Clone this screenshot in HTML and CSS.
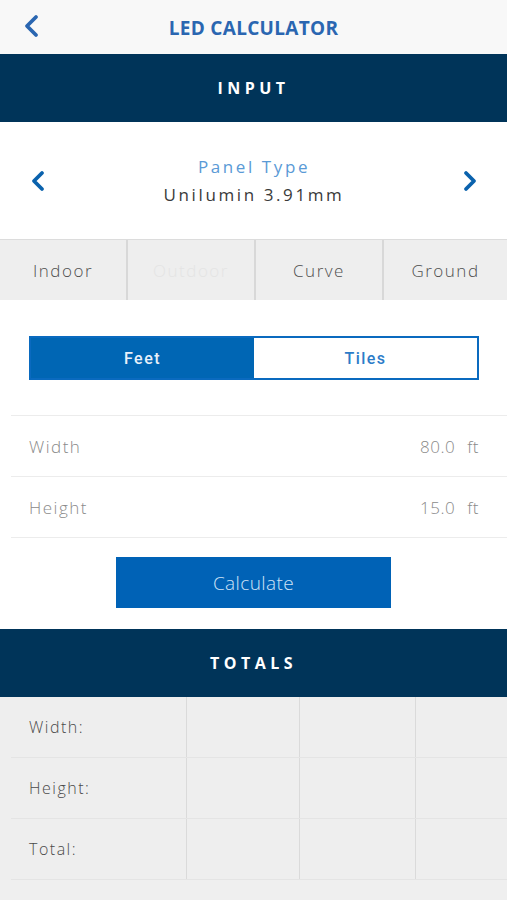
FILE: index.html
```html
<!DOCTYPE html>
<html lang="en">
<head>
  <meta charset="UTF-8">
  <title>LED Calculator</title>
  <link rel="stylesheet" href="styles.css">
</head>
<body>
  <div class="topbar">
    <span class="back">
      <svg width="18" height="24" viewBox="0 0 18 24"><path d="M13 3 L4 12 L13 21" fill="none" stroke="#2a66b1" stroke-width="3.8" stroke-linecap="round" stroke-linejoin="round"/></svg>
    </span>
    <h1>LED CALCULATOR</h1>
  </div>

  <div class="section-head">INPUT</div>

  <div class="panel">
    <span class="arrow">
      <svg width="18" height="24" viewBox="0 0 18 24"><path d="M13 4 L5 12 L13 20" fill="none" stroke="#0a62ad" stroke-width="3.8" stroke-linecap="round" stroke-linejoin="round"/></svg>
    </span>
    <div class="panel-text">
      <div class="panel-label">Panel Type</div>
      <div class="panel-name">Unilumin 3.91mm</div>
    </div>
    <span class="arrow">
      <svg width="18" height="24" viewBox="0 0 18 24"><path d="M5 4 L13 12 L5 20" fill="none" stroke="#0a62ad" stroke-width="3.8" stroke-linecap="round" stroke-linejoin="round"/></svg>
    </span>
  </div>

  <div class="tabs">
    <div class="tab">Indoor</div>
    <div class="tab disabled">Outdoor</div>
    <div class="tab">Curve</div>
    <div class="tab">Ground</div>
  </div>

  <div class="units">
    <div class="seg">
      <div class="seg-item active">Feet</div>
      <div class="seg-item">Tiles</div>
    </div>
  </div>

  <div class="fields">
    <div class="field">
      <span class="field-label">Width</span>
      <span class="field-value">80.0<span class="unit">ft</span></span>
    </div>
    <div class="field">
      <span class="field-label">Height</span>
      <span class="field-value">15.0<span class="unit">ft</span></span>
    </div>
  </div>

  <div class="actions">
    <button class="calc">Calculate</button>
  </div>

  <div class="section-head">TOTALS</div>

  <div class="totals">
    <div class="trow">
      <div class="tlabel">Width:</div><div class="tcell"></div><div class="tcell"></div><div class="tcell"></div>
    </div>
    <div class="trow">
      <div class="tlabel">Height:</div><div class="tcell"></div><div class="tcell"></div><div class="tcell"></div>
    </div>
    <div class="trow">
      <div class="tlabel">Total:</div><div class="tcell"></div><div class="tcell"></div><div class="tcell"></div>
    </div>
  </div>
</body>
</html>
```

FILE: styles.css
```css
body {
  margin: 0;
  background-color: #efefef;
  font-family: "Open Sans", "Liberation Sans", sans-serif;
  width: 507px;
  height: 900px;
  overflow: hidden;
}
.topbar {
  height: 54px;
  background-color: #f8f8f8;
  display: flex;
  align-items: center;
  justify-content: center;
  position: relative;
}
.back {
  position: absolute;
  left: 23px;
  top: 14px;
}
h1 {
  margin: 0;
  padding-top: 2px;
  color: #2a66b1;
  font-size: 19px;
  font-weight: 700;
  letter-spacing: 0.3px;
}
.section-head {
  height: 68px;
  background-color: #003459;
  color: white;
  font-weight: 700;
  font-size: 16px;
  letter-spacing: 4.5px;
  display: flex;
  align-items: center;
  justify-content: center;
}
.panel {
  background-color: white;
  height: 117px;
  display: flex;
  align-items: center;
  justify-content: space-between;
  padding: 0 28px 0 29px;
}
.arrow {
  display: flex;
}
.panel-text {
  text-align: center;
}
.panel-label {
  color: #5a9ad6;
  font-size: 17px;
  letter-spacing: 2.6px;
  line-height: 28px;
}
.panel-name {
  color: #3a3a3a;
  font-size: 17px;
  letter-spacing: 2.6px;
  line-height: 28px;
}
.tabs {
  display: grid;
  grid-template-columns: 128px 128px 128px 1fr;
  height: 60px;
  border-top: 1px solid #dcdcdc;
  background-color: #eeeeee;
}
.tab {
  display: flex;
  align-items: center;
  justify-content: center;
  color: #4e4e4e;
  font-size: 17px;
  font-weight: 300;
  letter-spacing: 1.5px;
  border-right: 2px solid #d8d8d8;
}
.tab:last-child {
  border-right: none;
}
.tab.disabled {
  color: #e4e4e4;
}
.units {
  background-color: white;
  padding: 36px 28px 35px 29px;
}
.seg {
  display: flex;
  height: 40px;
  border: 2px solid #0a6abf;
}
.seg-item {
  flex: 1;
  display: flex;
  align-items: center;
  justify-content: center;
  color: #2c7cc8;
  font-family: Roboto, sans-serif;
  font-weight: 500;
  font-size: 16px;
  letter-spacing: 1.5px;
  background-color: white;
}
.seg-item.active {
  background-color: #0066b4;
  color: #e8f0fa;
}
.fields {
  background-color: white;
  padding-left: 11px;
}
.field {
  display: flex;
  justify-content: space-between;
  align-items: center;
  height: 60px;
  border-top: 1px solid #ececec;
  padding: 0 28px 0 18px;
}
.field:last-child {
  border-bottom: 1px solid #ececec;
}
.field-label {
  color: #8a8a8a;
  font-size: 17px;
  font-weight: 300;
  letter-spacing: 1.5px;
}
.field-value {
  color: #8a8a8a;
  font-size: 17px;
  font-weight: 300;
  letter-spacing: 0.5px;
}
.unit {
  margin-left: 12px;
}
.actions {
  background-color: white;
  display: flex;
  justify-content: center;
  padding: 19px 0 21px;
}
.calc {
  width: 275px;
  height: 51px;
  border: none;
  background-color: #0062b6;
  color: #cfe3f7;
  font-family: "Open Sans", sans-serif;
  font-size: 19px;
  font-weight: 300;
  letter-spacing: 0.4px;
  cursor: pointer;
}
.totals {
  background-color: #eeeeee;
  padding-left: 11px;
}
.trow {
  display: grid;
  grid-template-columns: 175px 113px 116px 1fr;
  height: 60px;
  border-bottom: 1px solid #e4e4e4;
}
.tlabel {
  display: flex;
  align-items: center;
  padding-left: 18px;
  color: #4a4a4a;
  font-size: 16px;
  font-weight: 300;
  letter-spacing: 1.5px;
}
.tcell {
  border-left: 1px solid #dadada;
}
```
